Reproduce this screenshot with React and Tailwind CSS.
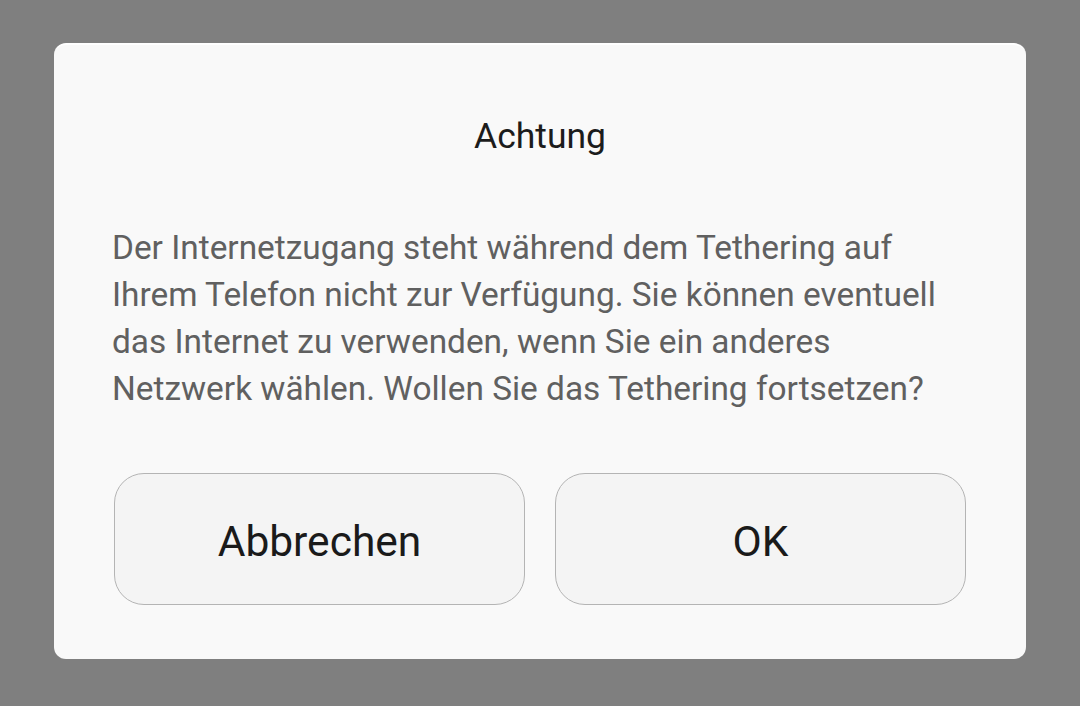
export default function App() {
  return (
    <div className="w-[1080px] h-[706px] bg-[#7f7f7f] pt-[43px] px-[54px] font-['Roboto',sans-serif]">
      <div className="h-[616px] rounded-[12px] bg-[#f9f9f9] border-t-2 border-white flex flex-col px-[60px]">
        <h1 className="mt-[69px] text-center text-[35.5px] leading-[44px] text-[#1c1c1c]">Achtung</h1>
        <p className="mt-[66px] -ml-[2px] text-[33.4px] leading-[47px] text-[#606060]">
          Der Internetzugang steht während dem Tethering auf<br />
          Ihrem Telefon nicht zur Verfügung. Sie können eventuell<br />
          das Internet zu verwenden, wenn Sie ein anderes<br />
          Netzwerk wählen. Wollen Sie das Tethering fortsetzen?
        </p>
        <div className="mt-auto mb-[54px] grid grid-cols-2 gap-[30px]">
          <button className="h-[132px] rounded-[30px] border border-[#b4b4b4] bg-[#f4f4f4] pt-[5px] text-[42.5px] text-[#1a1a1a]">
            Abbrechen
          </button>
          <button className="h-[132px] rounded-[30px] border border-[#b4b4b4] bg-[#f4f4f4] pt-[5px] text-[42.5px] text-[#1a1a1a]">
            OK
          </button>
        </div>
      </div>
    </div>
  );
}
